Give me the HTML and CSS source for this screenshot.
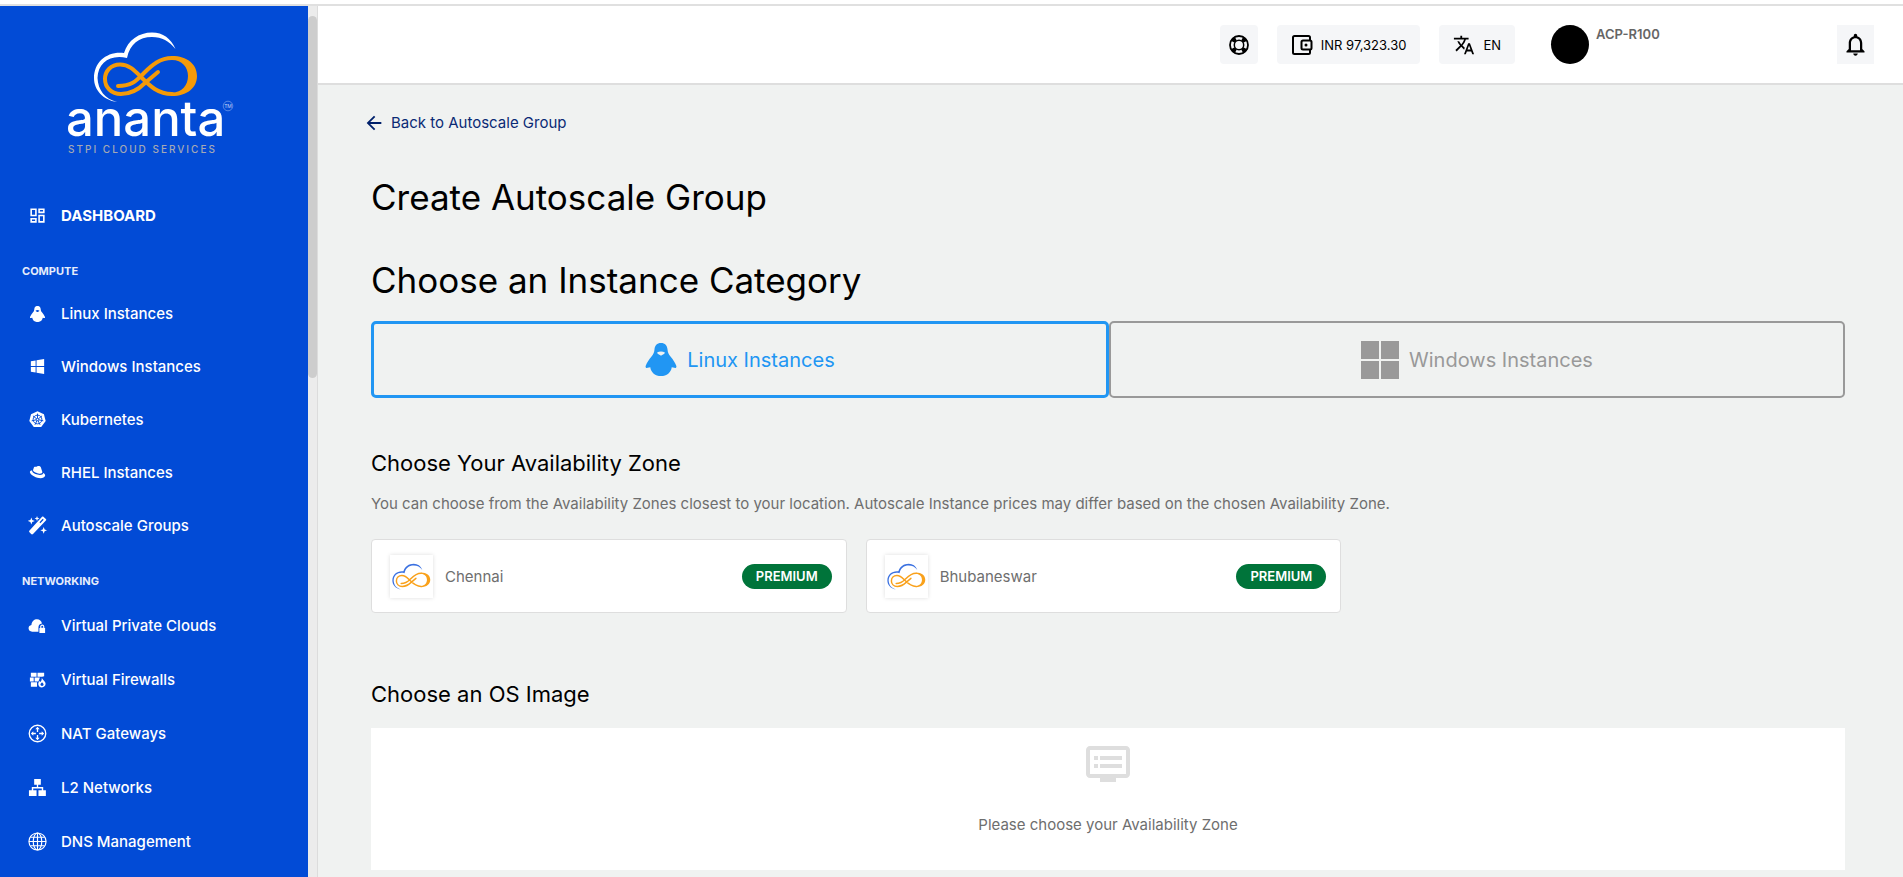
FILE: index.html
```html
<!DOCTYPE html>
<html lang="en">
<head>
<meta charset="utf-8">
<meta name="viewport" content="width=device-width, initial-scale=1">
<title>Create Autoscale Group</title>
<link rel="stylesheet" href="styles.css">
</head>
<body>
<svg class="defs" aria-hidden="true">
  <defs>
    <symbol id="penguin" viewBox="0 0 30 32">
      <path fill-rule="evenodd" d="M15 0c4 0 6 2.600 6.300 6 .2 3 .9 4.600 2.900 7 2.500 3 4.500 6 5.700 9.200.4 1.500-.7 2.300-2 1.900l-2.500-.7C24.800 28.500 20.500 32 15 32S5.200 28.500 4.600 23.400l-2.500.7c-1.300.4-2.400-.4-2-1.900C1.300 19 3.300 16 5.800 13c2-2.400 2.700-4 2.900-7C9 2.600 11 0 15 0zM11 9.500c1.200 1.600 2.600 2 4 2.800 1.400-.8 2.800-1.200 4-2.800-2.400-1.800-5.600-1.800-8 0z"/>
    </symbol>
    <symbol id="cloud-mark" viewBox="31 0 106 72">
      <path class="mark-cloud" d="M55 71C41 69 32 59 32 47 32 31 45 20 62 22 66 9 77 1.500 90 1.500c11 0 19 6 23.500 16.500C107 10 100 6 90 6 77 6 68 13 65 27 48 23 36 32 35.500 47 36 59 43 68 55 71z"/>
      <path class="mark-line" d="M96 41L83 52C75 60 68 63 59 63 49 63 43 56 43 48S49 33.500 58 33.500C68 33.500 74 41 80 47 88 55 96 63 110 63M110 27C98 27 90 34 82 42 75 49 71 55 56 55"/>
      <path class="mark-bulge" d="M110 25C125 25 135 33 135 45S125 65 110 65V61.500C120 61.500 126 54 126 45S120 29 110 29z"/>
    </symbol>
  </defs>
</svg>

<div class="app">
  <aside class="sidebar">
    <nav class="nav" aria-label="Main">
      <a class="brand" href="#">
        <svg class="brand-logo" viewBox="0 0 180 132" role="img" aria-label="ananta STPI Cloud Services">
          <use href="#cloud-mark" x="31" y="1" width="106" height="72"/>
          <text class="brand-name" x="4" y="106">ananta</text>
          <text class="brand-sub" x="6" y="123">STPI CLOUD SERVICES</text>
          <circle cx="166" cy="76" r="4.800" fill="none" stroke="#8fb0ee" stroke-width=".6"/>
          <text class="brand-tm" x="166" y="78" text-anchor="middle">TM</text>
        </svg>
      </a>

      <a class="nav-item nav-main" href="#">
        <svg viewBox="0 0 24 24"><path d="M19 5v2h-4V5h4M9 5v6H5V5h4m10 8v6h-4v-6h4M9 17v2H5v-2h4M21 3h-8v6h8V3zM11 3H3v10h8V3zm10 8h-8v10h8V11zm-10 4H3v6h8v-6z"/></svg>
        Dashboard
      </a>

      <h2 class="nav-heading">Compute</h2>
      <a class="nav-item" href="#"><svg viewBox="0 0 20 20"><use href="#penguin" x="2" y="2" width="16" height="17"/></svg>Linux Instances</a>
      <a class="nav-item" href="#"><svg viewBox="0 0 20 20"><path d="M3 4.500l5-.9v6H3zM9 3.400l8-1.400v7.600H9zM3 10.400h5v6l-5-.9zM9 10.400h8V18l-8-1.400z"/></svg>Windows Instances</a>
      <a class="nav-item" href="#"><svg viewBox="0 0 20 20"><path d="M10 1.200l6.800 3.200 1.800 7.300-4.700 6.300H6.100l-4.700-6.300 1.800-7.300z"/><g fill="none" stroke="#024bd6" stroke-width="1"><circle cx="10" cy="10" r="4.600"/><circle cx="10" cy="10" r="1.300"/><path d="M10 3.800v4.900M5.200 6.200l3.800 3M14.800 6.200l-3.800 3M3.900 11.400l4.800-1.100M16.100 11.400l-4.800-1.100M7.300 15.600l2.100-4.400M12.700 15.600l-2.100-4.400"/></g></svg>Kubernetes</a>
      <a class="nav-item" href="#"><svg viewBox="0 0 20 20"><path d="M6.300 4.600c.8-1.300 2.200-.6 3.200-1 1.500-.7 3.500-.2 4 1l1.600 4.800c.2 1.600-2 2.100-4.200 1.600C8 10.400 5 8.800 5.300 7.400zM4.400 7.800C4 9.800 7 11.400 10 12.200c3 .7 6 .3 6-1.700 1.500.7 2.300 1.800 2 3-.6 2.400-4.500 3-8.200 2C5.500 14.300 1.600 11.400 2 9.300c.2-1 1.200-1.500 2.400-1.500z"/></svg>RHEL Instances</a>
      <a class="nav-item" href="#"><svg viewBox="0 0 20 20"><path fill-rule="evenodd" d="M16.200.8l2.600 2.400c.5.500.5 1.100 0 1.600L5.300 18.900c-.7.700-1.400.7-2 0l-1.700-1.700c-.6-.6-.6-1.300 0-2L14.800.8c.5-.4 1-.4 1.400 0zM15.500 3l-3.400 3.600.9.900 3.500-3.500zM3.500 1.500l1 2.700 2.700 1-2.700 1-1 2.700-1-2.700-2.700-1 2.700-1zM9.500 0l.7 1.900 1.900.7-1.900.7-.7 1.900-.7-1.900-1.900-.7 1.900-.7zM16.500 11.500l1 2.600 2.500 1-2.500 1-1 2.600-1-2.600-2.500-1 2.500-1z"/></svg>Autoscale Groups</a>

      <h2 class="nav-heading">Networking</h2>
      <div class="nav-group">
        <a class="nav-item" href="#"><svg viewBox="0 0 20 20"><path d="M4.400 16.500C2 16.500.6 15 .6 13c0-1.900 1.200-3.200 3-3.500C4 5.500 6.500 3.500 9.500 3.500c2.800 0 4.700 1.700 5.200 4.400-2.600.4-3.700 2-3.700 4.100v4.500z"/><path fill-rule="evenodd" d="M12 12.500h.8v-1c0-1.700.8-2.600 2.200-2.600s2.200.9 2.200 2.600v1h.8V18h-6zm2-.1h2v-1.100c0-.7-.4-1.100-1-1.100s-1 .4-1 1.100z"/></svg>Virtual Private Clouds</a>
        <a class="nav-item" href="#"><svg viewBox="0 0 20 20"><path d="M3 3h6v4H3zM10 3h7v3.500l-2 .5h-5zM2 8h4v4H2zM7 8h5.500L11 12H7zM3 13h6.500v4.500H3zM14.500 8c.3 2.200 4 3.800 4 6.500 0 2.300-1.700 3.800-3.900 3.800s-3.800-1.500-3.800-3.600c0-1.400.7-2.300 1.400-3.200l1 1.200c1-1.300 1.500-2.700 1.300-4.700z"/><path fill="#024bd6" d="M14.800 12.800c1 1 1.600 1.700 1.600 2.500 0 .9-.7 1.500-1.600 1.500s-1.700-.6-1.700-1.500c0-.8.700-1.500 1.700-2.500z"/></svg>Virtual Firewalls</a>
        <a class="nav-item" href="#"><svg viewBox="0 0 20 20"><circle cx="10" cy="10" r="8.700" fill="none" stroke="#fff" stroke-width="1.400"/><path d="M10 3l2.300 2.600h-1.600v2.700H9.300V5.600H7.700zM10 17l2.300-2.600h-1.600v-2.700H9.300v2.700H7.700zM3 10l2.600-2.300v1.600h2.700v1.400H5.600v1.600zM17 10l-2.600-2.300v1.600h-2.700v1.400h2.700v1.600z"/></svg>NAT Gateways</a>
        <a class="nav-item" href="#"><svg viewBox="0 0 20 20"><path d="M6.500 1h7v6h-2.800v2.500H16V13h2.800v6H11v-6h3.500v-2h-9v2H9v6H1v-6h3V9.500h5.300V7H6.500z"/></svg>L2 Networks</a>
        <a class="nav-item" href="#"><svg viewBox="0 0 20 20" class="line"><circle cx="10" cy="10" r="9"/><ellipse cx="10" cy="10" rx="4.500" ry="9"/><path d="M10 1v18M1 10h18M2.500 5.500h15M2.500 14.500h15"/></svg>DNS Management</a>
      </div>
    </nav>
    <div class="scrollbar"><div class="scrollbar-thumb"></div></div>
  </aside>

  <div class="page">
    <header class="topbar">
      <button class="chip" type="button" aria-label="Help">
        <svg viewBox="0 0 22 22"><circle cx="11" cy="11" r="9" fill="none" stroke="#000" stroke-width="1.800"/><circle cx="11" cy="11" r="4.700" fill="none" stroke="#000" stroke-width="1.500"/><path d="M6.600 2.600l2.200 4-2.200 2.200-4-2.200zM15.400 2.600l4 4-4 2.200-2.200-2.200zM2.600 15.400l4-2.200 2.200 2.200-2.200 4zM19.400 15.400l-4-2.200-2.200 2.200 2.200 4z"/></svg>
      </button>
      <button class="chip" type="button">
        <svg viewBox="0 0 22 22" fill="none" stroke="#000" stroke-width="2"><path d="M19 6V3.500A1.500 1.500 0 0 0 17.500 2h-14A1.500 1.500 0 0 0 2 3.500v15A1.500 1.500 0 0 0 3.500 20h14a1.500 1.500 0 0 0 1.500-1.500V16"/><rect x="10.500" y="6.500" width="10" height="9" rx="1.500"/><circle cx="15" cy="11" r="1.500" fill="#000" stroke="none"/></svg>
        INR 97,323.30
      </button>
      <button class="chip" type="button">
        <svg viewBox="0 0 24 24"><path d="M12.870 15.070l-2.540-2.510.03-.03c1.740-1.940 2.980-4.170 3.710-6.530H17V4h-7V2H8v2H1v1.990h11.170C11.500 7.920 10.440 9.750 9 11.350 8.070 10.320 7.300 9.190 6.690 8h-2c.73 1.630 1.730 3.170 2.980 4.560l-5.090 5.020L4 19l5-5 3.110 3.110.76-2.040zM18.500 10h-2L12 22h2l1.120-3h4.750L21 22h2l-4.500-12zm-2.620 7l1.620-4.330L19.120 17h-3.240z"/></svg>
        EN
      </button>
      <div class="profile"><span class="avatar"></span><span class="profile-name">ACP-R100</span></div>
      <button class="chip chip-bell" type="button" aria-label="Notifications">
        <svg viewBox="0 0 24 24"><path d="M12 22c1.100 0 2-.9 2-2h-4c0 1.100.9 2 2 2zm6-6v-5c0-3.070-1.630-5.640-4.500-6.320V4c0-.83-.67-1.500-1.500-1.500s-1.500.67-1.500 1.500v.68C7.640 5.360 6 7.920 6 11v5l-2 2v1h16v-1l-2-2zm-2 1H8v-6c0-2.480 1.510-4.500 4-4.500s4 2.020 4 4.500v6z"/></svg>
      </button>
    </header>

    <main class="content">
      <a class="back" href="#">
        <svg viewBox="0 0 24 24"><path d="M20 11H7.830l5.590-5.590L12 4l-8 8 8 8 1.410-1.410L7.830 13H20v-2z"/></svg>
        Back to Autoscale Group
      </a>
      <h1 class="title">Create Autoscale Group</h1>
      <h2 class="title">Choose an Instance Category</h2>
      <div class="tabs">
        <button class="tab tab-active" type="button"><svg class="tab-penguin"><use href="#penguin"/></svg>Linux Instances</button>
        <button class="tab" type="button"><svg class="tab-windows" viewBox="0 0 38 38"><path d="M0 0h18v18H0zM20 0h18v18H20zM0 20h18v18H0zM20 20h18v18H20z"/></svg>Windows Instances</button>
      </div>

      <section class="zone-section">
        <h3 class="section-title">Choose Your Availability Zone</h3>
        <p class="hint">You can choose from the Availability Zones closest to your location. Autoscale Instance prices may differ based on the chosen Availability Zone.</p>
        <div class="zones">
          <button class="zone" type="button">
            <span class="zone-logo"><svg><use href="#cloud-mark"/></svg></span>
            <span class="zone-name">Chennai</span>
            <span class="badge">PREMIUM</span>
          </button>
          <button class="zone" type="button">
            <span class="zone-logo"><svg><use href="#cloud-mark"/></svg></span>
            <span class="zone-name">Bhubaneswar</span>
            <span class="badge">PREMIUM</span>
          </button>
        </div>
      </section>

      <section class="os-section">
        <h3 class="section-title">Choose an OS Image</h3>
        <div class="empty">
          <svg viewBox="0 0 24 24"><path d="M21 3H3c-1.100 0-2 .9-2 2v12c0 1.100.9 2 2 2h5v2h8v-2h5c1.100 0 1.990-.9 1.990-2L23 5c0-1.100-.9-2-2-2zm0 14H3V5h18v12zm-2-9H8v2h11V8zm0 4H8v2h11v-2zM7 8H5v2h2V8zm0 4H5v2h2v-2z"/></svg>
          <p>Please choose your Availability Zone</p>
        </div>
      </section>
    </main>
  </div>
</div>
</body>
</html>
```

FILE: styles.css
```css
* { box-sizing: border-box; }

body {
  margin: 0;
  padding-top: 4px;
  background: #fff;
  font-family: Inter, "Liberation Sans", sans-serif;
  font-size: 15px;
  color: #000;
}

h1, h2, h3, p { margin: 0; font-weight: 400; }
a { color: inherit; text-decoration: none; }
button { font: inherit; color: inherit; border: 0; cursor: pointer; }
svg { display: block; flex: none; }
.defs { position: absolute; width: 0; height: 0; }

.app {
  display: flex;
  height: calc(100vh - 4px);
  border-top: 2px solid #e0e0e0;
  overflow: hidden;
}

/* Sidebar */
.sidebar {
  display: flex;
  flex: none;
  width: 318px;
  border-right: 1px solid #dcdcdc;
}
.nav {
  flex: 1;
  overflow: hidden;
  background: #024bd6;
  color: #fff;
}
.scrollbar { width: 9px; padding-top: 10px; background: #ececec; }
.scrollbar-thumb { height: 42%; border-radius: 5px; background: #cdcdcd; }

.brand { display: block; padding: 24px 0 0 62px; }
.brand-logo { width: 180px; height: 132px; --cloud: #fff; --loop: #f59a08; }
.brand-name { font-size: 49px; font-weight: 500; fill: #fff; }
.brand-sub { font-size: 10px; font-weight: 500; letter-spacing: 2px; fill: #a4a9b4; }
.brand-tm { font-size: 5px; fill: #c5d5f5; }

/* Cloud and infinity emblem, coloured by its container */
.mark-cloud { fill: var(--cloud); }
.mark-line { fill: none; stroke: var(--loop); stroke-width: 4px; stroke-linecap: round; }
.mark-bulge { fill: var(--loop); }

.nav-item {
  display: flex;
  align-items: center;
  gap: 14px;
  height: 53px;
  padding-left: 28px;
  font-weight: 500;
}
.nav-item svg { width: 19px; height: 19px; fill: #fff; }
.nav-item svg.line { fill: none; stroke: #fff; stroke-width: 1.2px; }
.nav-group { padding-top: 1px; }
.nav-group .nav-item { height: 54px; }
.nav-main {
  margin-top: 27px;
  font-weight: 700;
  text-transform: uppercase;
}
.nav-heading {
  padding: 22px 0 9px 22px;
  font-size: 11px;
  line-height: 14px;
  font-weight: 700;
  text-transform: uppercase;
  color: #e6edfb;
}

/* Top bar */
.page { display: flex; flex: 1; flex-direction: column; min-width: 0; }
.topbar {
  display: flex;
  flex: none;
  align-items: center;
  justify-content: flex-end;
  gap: 19px;
  height: 79px;
  padding-right: 29px;
  border-bottom: 2px solid #dedede;
  background: #fff;
}
.chip {
  display: flex;
  align-items: center;
  gap: 8px;
  height: 39px;
  padding: 0 14px;
  border-radius: 4px;
  background: #f5f6f8;
  font-size: 13px;
}
.chip svg { width: 22px; height: 22px; }
.chip:first-child { padding: 0 8px; }
.chip-bell { padding: 0 5px; border-radius: 0; }
.chip-bell svg { width: 27px; height: 27px; }
.profile { display: flex; gap: 7px; width: 267px; margin-left: 17px; }
.avatar { width: 38px; height: 39px; border-radius: 50%; background: #000; }
.profile-name { font-size: 13px; line-height: 18px; font-weight: 600; color: #666; }

/* Content */
.content {
  flex: 1;
  padding: 27px 58px 8px 53px;
  background: #f0f2f1;
}
.back {
  display: inline-flex;
  align-items: center;
  gap: 6px;
  margin-left: -8px;
  line-height: 20px;
  color: #0a2a75;
}
.back svg { width: 22px; height: 22px; fill: #00206b; }
.title { font-size: 35px; line-height: 44px; }
h1.title { margin: 37px 0 39px; }

.tabs { display: flex; margin-top: 19px; }
.tab {
  display: flex;
  flex: 1;
  align-items: center;
  justify-content: center;
  gap: 10px;
  height: 77px;
  border: 2px solid #999;
  border-radius: 5px;
  background: none;
  font-size: 20px;
  color: #999;
}
.tab svg { fill: currentColor; }
.tab-active { border: 3px solid #2196f3; color: #2196f3; }
.tab-penguin { width: 32px; height: 33px; }
.tab-windows { width: 38px; height: 38px; }

.section-title { font-size: 22px; line-height: 28px; }
.zone-section { margin-top: 51px; }
.hint { margin: 17px 0 25px; line-height: 20px; color: #6e6e6e; }
.zones {
  display: grid;
  grid-template-columns: repeat(3, 1fr);
  gap: 19px;
  padding-right: 9px;
}
.zone {
  display: flex;
  align-items: center;
  gap: 12px;
  height: 74px;
  padding: 0 14px 0 18px;
  border: 1px solid #dedede;
  border-radius: 4px;
  background: #fff;
  color: #6e6e6e;
}
.zone-logo {
  display: flex;
  align-items: center;
  justify-content: center;
  width: 43px;
  height: 43px;
  box-shadow: 0 0 4px #ddd;
}
.zone-logo svg { width: 39px; height: 27px; --cloud: #3a70e0; --loop: #f9a11b; }
.badge {
  margin-left: auto;
  padding: 0 14px;
  border-radius: 13px;
  background: #00743a;
  font-size: 13px;
  line-height: 25px;
  font-weight: 600;
  color: #fff;
}

.os-section { margin-top: 67px; }
.empty {
  display: flex;
  flex-direction: column;
  align-items: center;
  gap: 28px;
  margin-top: 20px;
  padding: 12px 0 36px;
  background: #fff;
  color: #6e6e6e;
}
.empty svg { width: 48px; height: 48px; fill: #dedede; }
.empty p { line-height: 18px; }
```
